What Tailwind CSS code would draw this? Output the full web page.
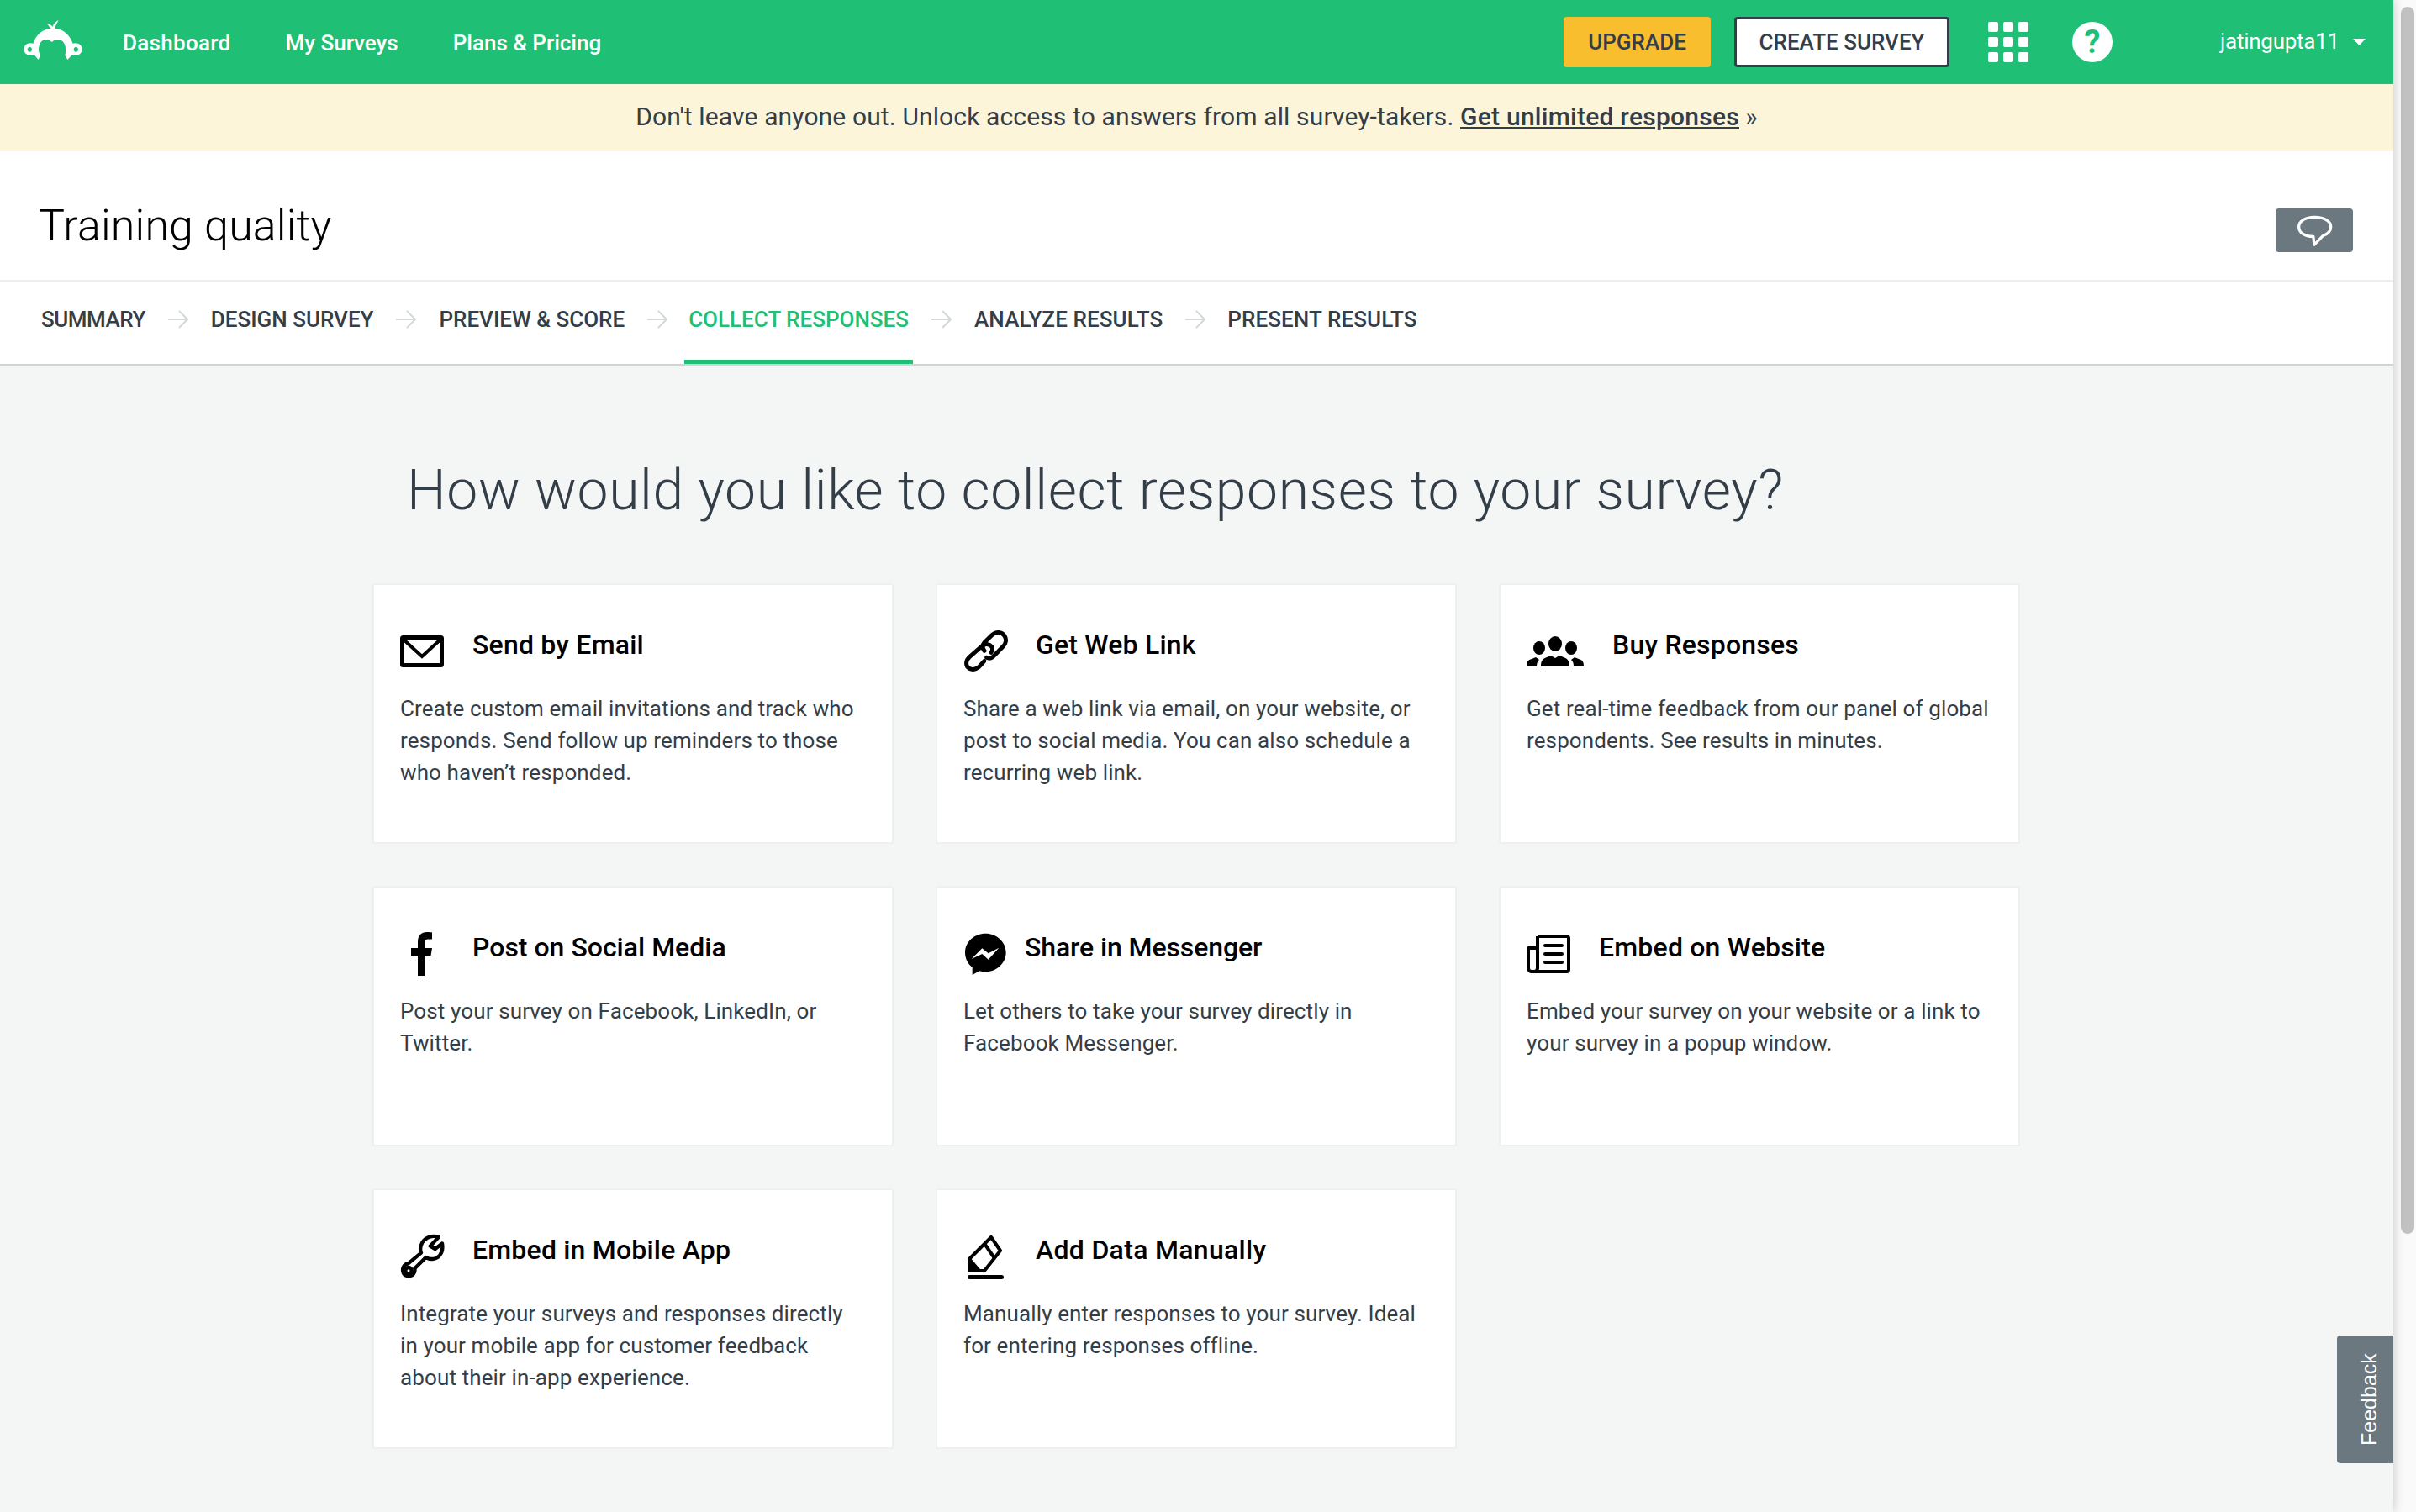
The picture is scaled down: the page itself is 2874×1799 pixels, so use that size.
<!DOCTYPE html>
<html lang="en">
<head>
<meta charset="utf-8">
<title>Collect responses</title>
<script src="https://cdn.jsdelivr.net/npm/@tailwindcss/browser@4"></script>
</head>
<body class="relative m-0 h-[1799px] w-[2874px] overflow-hidden bg-[#fafafa] font-['Roboto',sans-serif] text-[#333e48]">
<div class="flex h-[1799px]">
<div class="relative h-[1799px] w-[2847px] shrink-0 bg-[#f4f6f6] shadow-[0_0_12px_rgba(0,0,0,0.22)]">

<header class="flex h-[100px] items-center bg-[#1fc076] pl-[20px] text-white">
  <svg class="mt-[-5px] h-[65px] w-[90px]" viewBox="0 0 270 195"><path fill="#fff" fill-rule="evenodd" d="M122 56C115 50 112 44 107 38C116 40 124 44 128 50C130 42 138 32 149 27C144 36 138 46 135 56C165 58 190 80 200 110C205 108 212 108 218 110C232 115 236 130 230 142C224 152 212 156 197 151L181 168L172 152C176 140 176 122 168 108C160 96 143 90 125 105C108 90 92 96 84 108C76 122 76 140 84 152L77 168L62 151C48 156 34 152 28 142C22 130 26 115 40 110C46 108 52 108 58 110C68 80 92 58 122 56ZM46 122a8 9 0 1 0 .01 0zM211 122a8 9 0 1 0 .01 0z"/></svg>
  <nav class="ml-[36px] mt-[2px] flex text-[26px] font-medium leading-[36px]">
    <a class="mr-[65px] tracking-[0.3px]">Dashboard</a>
    <a class="mr-[65px]">My Surveys</a>
    <a>Plans &amp; Pricing</a>
  </nav>
  <div class="ml-auto flex items-center">
    <button class="flex h-[60px] w-[175px] items-center justify-center rounded-[4px] bg-[#f9be2d] text-[26px] font-medium text-[#333e48]">UPGRADE</button>
    <button class="ml-[28px] flex h-[60px] w-[256px] items-center justify-center rounded-[4px] border-[3px] border-[#333e48] bg-white text-[26px] font-medium text-[#333e48]">CREATE SURVEY</button>
    <div class="ml-[46px] grid w-[48px] grid-cols-3 gap-[6px]">
      <i class="h-[12px] w-[12px] rounded-[2px] bg-white"></i><i class="h-[12px] w-[12px] rounded-[2px] bg-white"></i><i class="h-[12px] w-[12px] rounded-[2px] bg-white"></i>
      <i class="h-[12px] w-[12px] rounded-[2px] bg-white"></i><i class="h-[12px] w-[12px] rounded-[2px] bg-white"></i><i class="h-[12px] w-[12px] rounded-[2px] bg-white"></i>
      <i class="h-[12px] w-[12px] rounded-[2px] bg-white"></i><i class="h-[12px] w-[12px] rounded-[2px] bg-white"></i><i class="h-[12px] w-[12px] rounded-[2px] bg-white"></i>
    </div>
    <div class="ml-[52px] flex h-[48px] w-[48px] items-center justify-center rounded-full bg-white text-[38px] font-bold leading-none text-[#1fc076]">?</div>
    <span class="ml-[128px] mt-[-2px] text-[26px] leading-[36px] tracking-[-0.25px]">jatingupta11</span>
    <svg class="ml-[16px] mr-[33px] h-[8px] w-[15px]" viewBox="0 0 15 8"><path fill="#fff" d="M0 0h15L7.500 8z"/></svg>
  </div>
</header>

<div class="flex h-[80px] items-center justify-center bg-[#fdf5d9] pb-[3px] text-[30px] leading-[40px] tracking-[0.13px]">
  <span>Don't leave anyone out. Unlock access to answers from all survey-takers. <a class="font-medium tracking-[0.25px] underline">Get unlimited responses</a> »</span>
</div>

<div class="flex h-[153px] items-start justify-between bg-white pl-[46px] pr-[48px]">
  <h1 class="mt-[54px] text-[52px] font-light leading-[70px] tracking-[0.15px] text-black">Training quality</h1>
  <div class="mt-[68px] flex h-[52px] w-[92px] items-center justify-center rounded-[4px] bg-[#6b787f]">
    <svg class="mt-[3px] h-[39px] w-[43px]" viewBox="95 48 130 118"><path fill="none" stroke="#fff" stroke-width="10" stroke-linejoin="round" d="M160 55C125 55 103 70 103 90C103 110 122 125 155 125L158 155L190 122C208 115 218 105 218 90C218 70 195 55 160 55Z"/></svg>
  </div>
</div>

<nav class="flex h-[102px] items-center border-y-2 border-t-[#eeeeee] border-b-[#d0d4d4] bg-white pl-[49px] text-[26px] font-medium leading-[36px]">
  <span class="mb-[8px] tracking-[-0.5px]">SUMMARY</span>
  <svg class="mx-[27px] mb-[8px] h-[24px] w-[24px]" viewBox="0 0 24 24"><path fill="none" stroke="#d5d8d8" stroke-width="2" d="M0 12h22M13 2l10 10-10 10"/></svg>
  <span class="mb-[8px]">DESIGN SURVEY</span>
  <svg class="mx-[27px] mb-[8px] h-[24px] w-[24px]" viewBox="0 0 24 24"><path fill="none" stroke="#d5d8d8" stroke-width="2" d="M0 12h22M13 2l10 10-10 10"/></svg>
  <span class="mb-[8px]">PREVIEW &amp; SCORE</span>
  <svg class="ml-[27px] mr-[25px] mb-[8px] h-[24px] w-[24px]" viewBox="0 0 24 24"><path fill="none" stroke="#d5d8d8" stroke-width="2" d="M0 12h22M13 2l10 10-10 10"/></svg>
  <span class="mx-[-5px] flex h-full items-center border-b-[5px] border-b-[#1fc076] px-[5px] pb-[3px] text-[#1fc076]">COLLECT RESPONSES</span>
  <svg class="mx-[27px] mb-[8px] h-[24px] w-[24px]" viewBox="0 0 24 24"><path fill="none" stroke="#d5d8d8" stroke-width="2" d="M0 12h22M13 2l10 10-10 10"/></svg>
  <span class="mb-[8px] tracking-[0.1px]">ANALYZE RESULTS</span>
  <svg class="ml-[27px] mr-[26px] mb-[8px] h-[24px] w-[24px]" viewBox="0 0 24 24"><path fill="none" stroke="#d5d8d8" stroke-width="2" d="M0 12h22M13 2l10 10-10 10"/></svg>
  <span class="mb-[8px] tracking-[0.1px]">PRESENT RESULTS</span>
</nav>

<main class="pl-[443px]">
  <h2 class="ml-[41px] h-[259px] pt-[104px] text-[66px] font-light leading-[90px] tracking-[0.63px]">How would you like to collect responses to your survey?</h2>
  <div class="grid w-[1960px] grid-cols-[620px_620px_620px] gap-x-[50px] gap-y-[50px]">

    <section class="h-[310px] rounded-[3px] border-2 border-[#eef0f0] bg-white px-[31px]">
      <div class="flex h-[128px] items-start">
        <svg class="mt-[60px] h-[38px] w-[52px] shrink-0" viewBox="0 0 52 38"><rect x="2.500" y="2.500" width="47" height="33" rx="1" fill="none" stroke="#000" stroke-width="5"/><path d="M3 4l23 21L49 4" fill="none" stroke="#000" stroke-width="4"/></svg>
        <h3 class="ml-[34px] mt-[51px] text-[32px] font-medium leading-[40px] tracking-[0.2px] text-black">Send by Email</h3>
      </div>
      <p class="text-[26px] leading-[38px] tracking-[0.12px]">Create custom email invitations and track who<br>responds. Send follow up reminders to those<br>who haven’t responded.</p>
    </section>

    <section class="h-[310px] rounded-[3px] border-2 border-[#eef0f0] bg-white px-[31px]">
      <div class="flex h-[128px] items-start">
        <svg class="ml-[-11px] mt-[39px] h-[70px] w-[80px] shrink-0" viewBox="0 0 240 210"><g fill="none" stroke="#000" stroke-width="15" stroke-linecap="round"><path d="M108 118C100 108 100 98 108 88L135 62C150 48 170 50 180 65C188 78 185 92 175 102L140 138C132 146 124 146 116 142"/><path d="M132 124C140 114 138 104 128 98C118 92 106 94 98 102L55 140C42 152 40 168 50 178C60 188 76 186 88 176L108 154"/></g></svg>
        <h3 class="ml-[17px] mt-[51px] text-[32px] font-medium leading-[40px] tracking-[0.2px] text-black">Get Web Link</h3>
      </div>
      <p class="text-[26px] leading-[38px] tracking-[0.12px]">Share a web link via email, on your website, or<br>post to social media. You can also schedule a<br>recurring web link.</p>
    </section>

    <section class="h-[310px] rounded-[3px] border-2 border-[#eef0f0] bg-white px-[31px]">
      <div class="flex h-[128px] items-start">
        <svg class="mt-[61px] h-[36px] w-[68px] shrink-0" viewBox="0 0 68 36"><g fill="#000"><ellipse cx="34" cy="9" rx="8" ry="9"/><ellipse cx="15" cy="14" rx="7" ry="8"/><ellipse cx="53" cy="14" rx="7" ry="8"/><path d="M17 36c0-7 2-9 7-11l5-2 5 3 5-3 5 2c5 2 7 4 7 11z"/><path d="M0 36c0-6 2-8 6-9l5-2 4 3c-2 2-3 4-3 8zM68 36c0-6-2-8-6-9l-5-2-4 3c2 2 3 4 3 8z"/></g></svg>
        <h3 class="ml-[34px] mt-[51px] text-[32px] font-medium leading-[40px] tracking-[0.2px] text-black">Buy Responses</h3>
      </div>
      <p class="text-[26px] leading-[38px] tracking-[0.12px]">Get real-time feedback from our panel of global<br>respondents. See results in minutes.</p>
    </section>

    <section class="h-[310px] rounded-[3px] border-2 border-[#eef0f0] bg-white px-[31px]">
      <div class="flex h-[128px] items-start">
        <svg class="mt-[53px] h-[52px] w-[52px] shrink-0" viewBox="0 0 52 52"><path fill="#000" d="M21 52V28h-8v-9h8v-7C21 4 25 0 32 0c3 0 5 .3 6 .5v8h-4c-4 0-5 1.500-5 5V19h9l-1.500 9H29v24z"/></svg>
        <h3 class="ml-[34px] mt-[51px] text-[32px] font-medium leading-[40px] text-black">Post on Social Media</h3>
      </div>
      <p class="text-[26px] leading-[38px] tracking-[0.12px]">Post your survey on Facebook, LinkedIn, or<br>Twitter.</p>
    </section>

    <section class="h-[310px] rounded-[3px] border-2 border-[#eef0f0] bg-white px-[31px]">
      <div class="flex h-[128px] items-start">
        <svg class="ml-[-11px] mt-[39px] h-[80px] w-[80px] shrink-0" viewBox="0 0 240 240"><path fill="#000" fill-rule="evenodd" d="M112 47C72 47 39 77 39 115C39 137 49 156 65 168V195L90 181C97 183 104 184 112 184C152 184 185 153 185 115C185 77 152 47 112 47ZM62 138L100 100L122 118L160 98L122 140L100 120Z"/></svg>
        <h3 class="ml-[4px] mt-[51px] text-[32px] font-medium leading-[40px] tracking-[-0.1px] text-black">Share in Messenger</h3>
      </div>
      <p class="text-[26px] leading-[38px] tracking-[0.12px]">Let others to take your survey directly in<br>Facebook Messenger.</p>
    </section>

    <section class="h-[310px] rounded-[3px] border-2 border-[#eef0f0] bg-white px-[31px]">
      <div class="flex h-[128px] items-start">
        <svg class="mt-[56px] h-[46px] w-[52px] shrink-0" viewBox="0 0 52 46"><g fill="none" stroke="#000" stroke-width="4"><path stroke-linejoin="round" d="M14 2h34c1 0 2 1 2 2v38c0 1-1 2-2 2H6c-2 0-4-2-4-4V16h9"/><path d="M13 2v38c0 2-2 4-4 4"/></g><g stroke="#000" stroke-width="4" stroke-linecap="round"><path d="M22 13h20M22 23h20M22 33h20"/></g></svg>
        <h3 class="ml-[34px] mt-[51px] text-[32px] font-medium leading-[40px] tracking-[0.2px] text-black">Embed on Website</h3>
      </div>
      <p class="text-[26px] leading-[38px] tracking-[0.12px]">Embed your survey on your website or a link to<br>your survey in a popup window.</p>
    </section>

    <section class="h-[310px] rounded-[3px] border-2 border-[#eef0f0] bg-white px-[31px]">
      <div class="flex h-[128px] items-start">
        <svg class="ml-[-11px] mt-[44px] h-[70px] w-[80px] shrink-0" viewBox="0 0 240 210"><g fill="none" stroke="#000" stroke-width="13" stroke-linejoin="round"><path d="M170 36C150 28 125 35 112 55C103 72 105 85 108 92L62 130C45 132 38 150 45 165C52 178 75 178 82 165C86 158 86 152 85 148L125 108C140 118 165 115 175 100C185 88 185 70 183 58L158 78L140 68Z"/><circle cx="63" cy="155" r="11"/></g></svg>
        <h3 class="ml-[17px] mt-[51px] text-[32px] font-medium leading-[40px] tracking-[0.2px] text-black">Embed in Mobile App</h3>
      </div>
      <p class="text-[26px] leading-[38px] tracking-[0.12px]">Integrate your surveys and responses directly<br>in your mobile app for customer feedback<br>about their in-app experience.</p>
    </section>

    <section class="h-[310px] rounded-[3px] border-2 border-[#eef0f0] bg-white px-[31px]">
      <div class="flex h-[128px] items-start">
        <svg class="mt-[54px] h-[52px] w-[52px] shrink-0" viewBox="0 0 52 52"><g fill="none" stroke="#000" stroke-width="4" stroke-linejoin="round"><path d="M33 2l11 16-19 24H7V28z"/><path d="M26 11l11 16M7 28l12 14"/></g><path d="M7 30v10h9z" fill="#000"/><rect x="5" y="47" width="43" height="5" rx="2.500" fill="#000"/></svg>
        <h3 class="ml-[34px] mt-[51px] text-[32px] font-medium leading-[40px] tracking-[0.3px] text-black">Add Data Manually</h3>
      </div>
      <p class="text-[26px] leading-[38px] tracking-[0.12px]">Manually enter responses to your survey. Ideal<br>for entering responses offline.</p>
    </section>

  </div>
</main>

<a class="absolute right-0 top-[1589px] flex h-[152px] w-[67px] rotate-180 items-center justify-center rounded-r-[4px] bg-[#6b787f] pr-[10px] font-['Liberation_Sans',sans-serif] text-[25px] text-white [writing-mode:vertical-rl]">Feedback</a>
</div>

<div class="flex-1 pl-[9px] pr-[2px] pt-[8px]"><div class="h-[1460px] rounded-full bg-[#c1c1c1]"></div></div>
</div>
</body>
</html>
